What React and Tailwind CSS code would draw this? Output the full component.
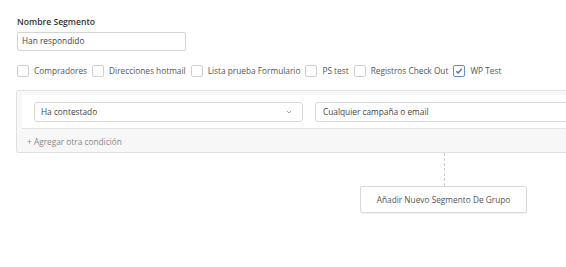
import React from 'react';

const lists = [
    { name: 'Compradores', checked: false },
    { name: 'Direcciones hotmail', checked: false },
    { name: 'Lista prueba Formulario', checked: false },
    { name: 'PS test', checked: false },
    { name: 'Registros Check Out', checked: false },
    { name: 'WP Test', checked: true },
];

const Checkbox = ({ checked }) => (
    <span
        className={
            checked
                ? 'flex items-center justify-center w-[12px] h-[12px] border border-[#5b8fd0] rounded-[2px] bg-white'
                : 'flex items-center justify-center w-[12px] h-[12px] border border-[#cfcfcf] rounded-[2px] bg-white'
        }
    >
        {checked && (
            <svg width="8" height="8" viewBox="0 0 8 8">
                <path d="M1.2 4.2 L3.2 6 L6.8 1.6" fill="none" stroke="#3f74bd" strokeWidth="1.4" />
            </svg>
        )}
    </span>
);

const App = () => {
    return (
        <div className="w-[566px] h-[267px] overflow-hidden bg-white text-[#555] font-['Open_Sans',sans-serif] text-[8.3px]">
            <div className="pl-[17px] pt-[16px]">
                <p className="font-semibold text-[#333] leading-[12px] text-[8.6px]">Nombre Segmento</p>
                <div className="mt-[4px] w-[169px] h-[19px] border border-[#d4d4d4] rounded-[2px] flex items-center px-[4px] text-[#444]">
                    Han respondido
                </div>
                <div className="flex items-center mt-[14px] gap-[5px]">
                    {lists.map(l => (
                        <label key={l.name} className="flex items-center gap-[5px]">
                            <Checkbox checked={l.checked} />
                            <span>{l.name}</span>
                        </label>
                    ))}
                </div>
            </div>
            <div className="ml-[16px] mt-[13px] w-[620px] h-[63px] border border-[#e0e0e0] rounded-[3px] bg-[#f7f7f7]">
                <div className="mt-[4px] ml-[5px] bg-white border-b border-[#e3e3e3] px-[12px] pt-[7px] pb-[6px] flex gap-[12px]">
                    <div className="w-[269px] h-[20px] border border-[#d9d9d9] rounded-[3px] flex items-center justify-between px-[6px] text-[#444]">
                        <span>Ha contestado</span>
                        <svg width="6" height="4" viewBox="0 0 6 4" className="mr-[4px]">
                            <path d="M1 1 L3 3 L5 1" fill="none" stroke="#999" strokeWidth="0.9" />
                        </svg>
                    </div>
                    <div className="w-[300px] h-[20px] border border-[#d9d9d9] rounded-[3px] flex items-center px-[7px] text-[#444]">
                        Cualquier campaña o email
                    </div>
                </div>
                <p className="ml-[10px] mt-[7px] text-[#888]">+ Agregar otra condición</p>
            </div>
            <div className="ml-[360px] w-[167px] flex flex-col items-center">
                <div className="h-[33px] border-l border-dashed border-[#cfcfcf] mr-[-2px]"></div>
                <div className="w-[167px] h-[27px] border border-[#d9d9d9] rounded-[2px] shadow-[0_1px_1px_rgba(0,0,0,0.06)] flex items-center justify-center text-[#555]">
                    Añadir Nuevo Segmento De Grupo
                </div>
            </div>
        </div>
    );
};

export default App;
